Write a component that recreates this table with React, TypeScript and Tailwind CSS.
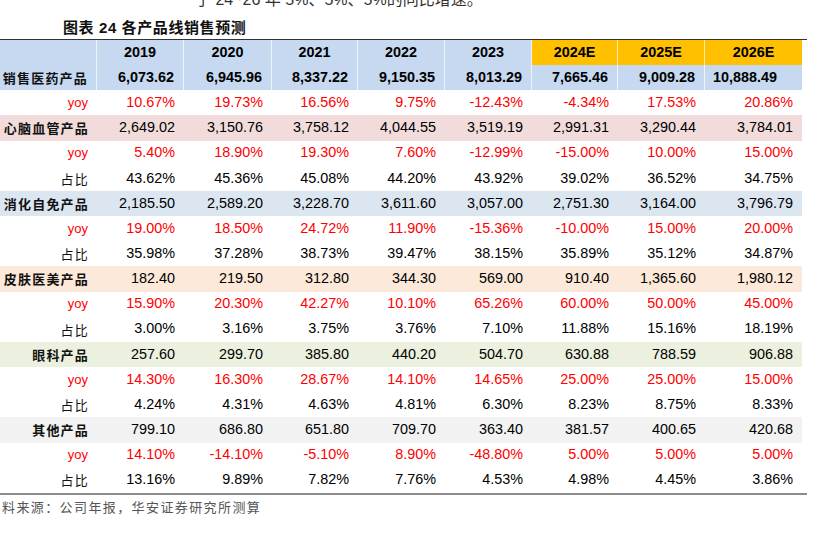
import { clsx } from "clsx";

type Row = {
  label: string;
  kind: "total" | "product" | "yoy" | "share";
  bg?: string;
  values: string[];
};

const years = ["2019", "2020", "2021", "2022", "2023", "2024E", "2025E", "2026E"];

// widths of the label column and the eight year columns
const cols = [
  "w-[97px]",
  "w-[87px]",
  "w-[88px]",
  "w-[86px]",
  "w-[87px]",
  "w-[87px]",
  "w-[86px]",
  "w-[87px]",
  "w-[97px]",
];

const rows: Row[] = [
  {
    label: "销售医药产品",
    kind: "total",
    bg: "bg-[#c6d9f1]",
    values: ["6,073.62", "6,945.96", "8,337.22", "9,150.35", "8,013.29", "7,665.46", "9,009.28", "10,888.49"],
  },
  { label: "yoy", kind: "yoy", values: ["10.67%", "19.73%", "16.56%", "9.75%", "-12.43%", "-4.34%", "17.53%", "20.86%"] },
  {
    label: "心脑血管产品",
    kind: "product",
    bg: "bg-[#f2dcdb]",
    values: ["2,649.02", "3,150.76", "3,758.12", "4,044.55", "3,519.19", "2,991.31", "3,290.44", "3,784.01"],
  },
  { label: "yoy", kind: "yoy", values: ["5.40%", "18.90%", "19.30%", "7.60%", "-12.99%", "-15.00%", "10.00%", "15.00%"] },
  { label: "占比", kind: "share", values: ["43.62%", "45.36%", "45.08%", "44.20%", "43.92%", "39.02%", "36.52%", "34.75%"] },
  {
    label: "消化自免产品",
    kind: "product",
    bg: "bg-[#dce6f1]",
    values: ["2,185.50", "2,589.20", "3,228.70", "3,611.60", "3,057.00", "2,751.30", "3,164.00", "3,796.79"],
  },
  { label: "yoy", kind: "yoy", values: ["19.00%", "18.50%", "24.72%", "11.90%", "-15.36%", "-10.00%", "15.00%", "20.00%"] },
  { label: "占比", kind: "share", values: ["35.98%", "37.28%", "38.73%", "39.47%", "38.15%", "35.89%", "35.12%", "34.87%"] },
  {
    label: "皮肤医美产品",
    kind: "product",
    bg: "bg-[#fde9d9]",
    values: ["182.40", "219.50", "312.80", "344.30", "569.00", "910.40", "1,365.60", "1,980.12"],
  },
  { label: "yoy", kind: "yoy", values: ["15.90%", "20.30%", "42.27%", "10.10%", "65.26%", "60.00%", "50.00%", "45.00%"] },
  { label: "占比", kind: "share", values: ["3.00%", "3.16%", "3.75%", "3.76%", "7.10%", "11.88%", "15.16%", "18.19%"] },
  {
    label: "眼科产品",
    kind: "product",
    bg: "bg-[#ebf1de]",
    values: ["257.60", "299.70", "385.80", "440.20", "504.70", "630.88", "788.59", "906.88"],
  },
  { label: "yoy", kind: "yoy", values: ["14.30%", "16.30%", "28.67%", "14.10%", "14.65%", "25.00%", "25.00%", "15.00%"] },
  { label: "占比", kind: "share", values: ["4.24%", "4.31%", "4.63%", "4.81%", "6.30%", "8.23%", "8.75%", "8.33%"] },
  {
    label: "其他产品",
    kind: "product",
    bg: "bg-[#f2f2f2]",
    values: ["799.10", "686.80", "651.80", "709.70", "363.40", "381.57", "400.65", "420.68"],
  },
  { label: "yoy", kind: "yoy", values: ["14.10%", "-14.10%", "-5.10%", "8.90%", "-48.80%", "5.00%", "5.00%", "5.00%"] },
  { label: "占比", kind: "share", values: ["13.16%", "9.89%", "7.82%", "7.76%", "4.53%", "4.98%", "4.45%", "3.86%"] },
];

function HeaderRow() {
  return (
    <div className="flex h-[25.17px] w-[802px] bg-[#c6d9f1]">
      <div className={clsx(cols[0], "border-r border-white/70")} />
      {years.map((y, i) => (
        <div
          key={y}
          className={clsx(
            cols[i + 1],
            "flex items-center justify-center text-[14.4px] font-bold text-black",
            i >= 5 && "bg-[#ffc000]",
            i < 7 && "border-r border-white/70",
          )}
        >
          {y}
        </div>
      ))}
    </div>
  );
}

function DataRow({ row }: { row: Row }) {
  const red = row.kind === "yoy";
  const bold = row.kind === "total";
  return (
    <div className={clsx("flex h-[25.17px] w-[802px]", row.bg)}>
      <div
        className={clsx(
          cols[0],
          "flex items-center justify-end pr-[8px]",
          bold && "border-r border-white/70",
        )}
      >
        {red ? (
          <span className="pr-[1px] text-[13px] text-[#ff0000]">{row.label}</span>
        ) : (
          <span
            className={clsx(
              "font-['Noto_Sans_CJK_SC',sans-serif] text-[13px] tracking-[1.2px] text-[#111]",
              row.kind === "share" ? "font-normal" : "font-semibold",
            )}
          >
            {row.label}
          </span>
        )}
      </div>
      {row.values.map((v, i) => {
        // the bold total of 2026E sits to the left of its cell
        const leftAligned = bold && i === 7;
        return (
          <div
            key={i}
            className={clsx(
              cols[i + 1],
              "flex items-center text-[14.4px]",
              leftAligned ? "justify-start pl-[8px]" : "justify-end pr-[9px]",
              red ? "text-[#ff0000]" : "text-black",
              bold && "font-bold",
              bold && i < 7 && "border-r border-white/70",
            )}
          >
            {v}
          </div>
        );
      })}
    </div>
  );
}

export default function App() {
  return (
    <div className="h-[538px] w-[818px] overflow-hidden bg-white font-['Liberation_Sans','Noto_Sans_CJK_SC',sans-serif]">
      <div className="-mt-[10px] ml-[195px] h-[20px] whitespace-nowrap text-[16px] leading-[20px] text-[#333]">
        于 24~26 年 5%、5%、5%的同比增速。
      </div>
      <div className="mt-[8px] ml-[63px] h-[20px] whitespace-nowrap text-[15px] leading-[20px] font-bold tracking-[0.6px] text-[#111]">
        图表 24 各产品线销售预测
      </div>
      <div className="mt-[1px] w-[807px] border-t border-b-2 border-t-[#333] border-b-[#8c8c8c]">
        <HeaderRow />
        {rows.map((r, i) => (
          <DataRow key={i} row={r} />
        ))}
      </div>
      <div className="mt-[2px] ml-[2px] h-[20px] whitespace-nowrap font-['Noto_Sans_CJK_SC',sans-serif] text-[13px] leading-[20px] tracking-[1.4px] text-[#555]">
        料来源：公司年报，华安证券研究所测算
      </div>
    </div>
  );
}
